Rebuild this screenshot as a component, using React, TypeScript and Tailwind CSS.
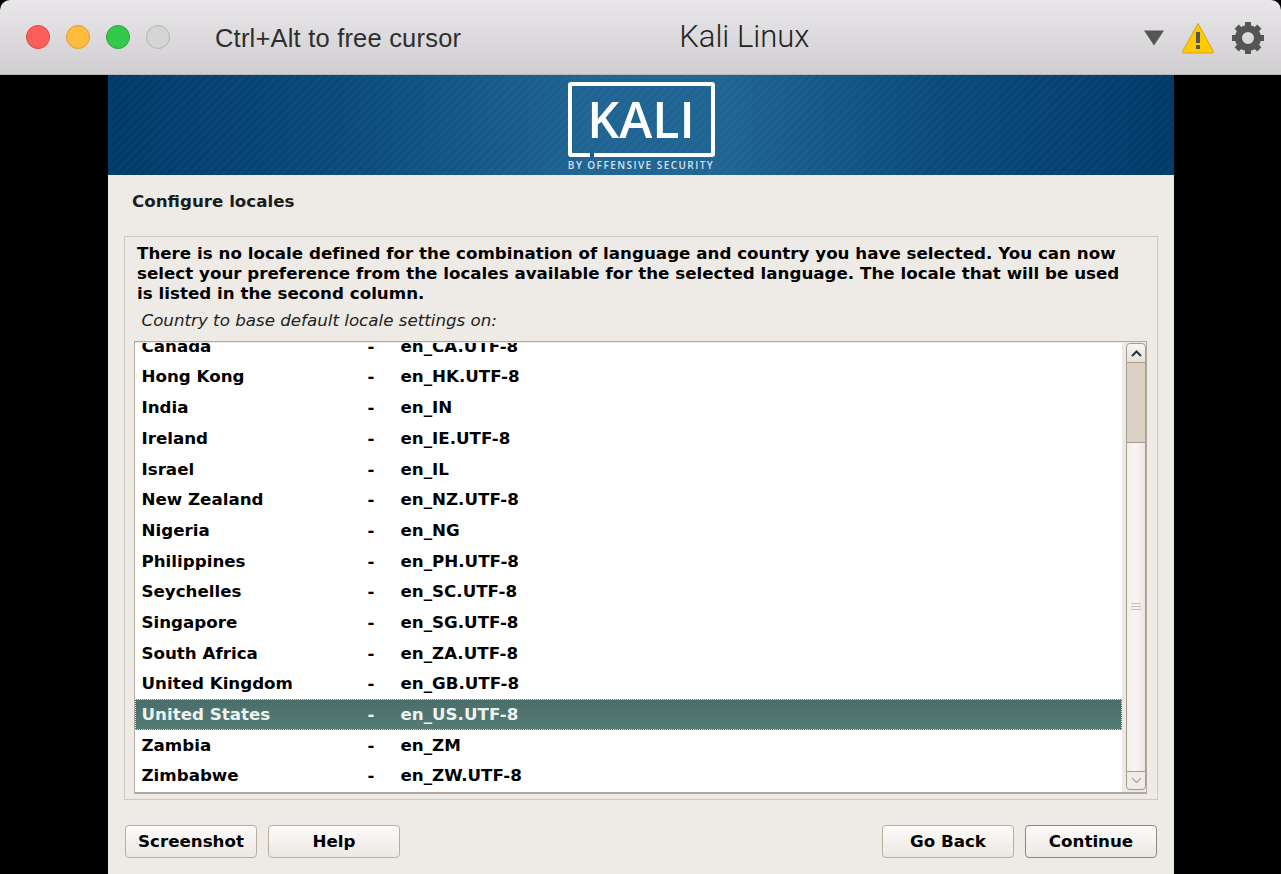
const rows = [
  ["Canada", "en_CA.UTF-8"],
  ["Hong Kong", "en_HK.UTF-8"],
  ["India", "en_IN"],
  ["Ireland", "en_IE.UTF-8"],
  ["Israel", "en_IL"],
  ["New Zealand", "en_NZ.UTF-8"],
  ["Nigeria", "en_NG"],
  ["Philippines", "en_PH.UTF-8"],
  ["Seychelles", "en_SC.UTF-8"],
  ["Singapore", "en_SG.UTF-8"],
  ["South Africa", "en_ZA.UTF-8"],
  ["United Kingdom", "en_GB.UTF-8"],
  ["United States", "en_US.UTF-8"],
  ["Zambia", "en_ZM"],
  ["Zimbabwe", "en_ZW.UTF-8"],
];

function TitleBar() {
  return (
    <div className="flex h-[75px] items-center rounded-t-[10px] border-b border-[#b9b7b9] bg-gradient-to-b from-[#e9e7e9] to-[#d0ced0] pl-[26px] pr-[16px] font-['Liberation_Sans',sans-serif] text-[#2e2e2e]">
      <div className="flex gap-4">
        <div className="size-6 rounded-full border border-[#e2463f] bg-[#fc5e5a]" />
        <div className="size-6 rounded-full border border-[#e09e2e] bg-[#fdbc40]" />
        <div className="size-6 rounded-full border border-[#2aa73a] bg-[#34c84a]" />
        <div className="size-6 rounded-full border border-[#b4b4b4] bg-[#d4d4d4]" />
      </div>
      <span className="ml-[45px] pt-[3px] text-[25.5px] tracking-[0.2px]">Ctrl+Alt to free cursor</span>
      <span className="ml-[218px] pt-[1px] font-['Roboto',sans-serif] text-[31px] font-light text-[#222]">Kali Linux</span>
      <div className="ml-auto flex items-center pt-[1px]">
        <svg width="22" height="17" viewBox="0 0 22 17">
          <path d="M1 1.5H21L11 16.5Z" fill="#555" />
        </svg>
        <svg className="ml-[16px]" width="34" height="32" viewBox="0 0 34 32">
          <path d="M17 1.5L32.5 29.5Q33 31 31.5 31H2.5Q1 31 1.5 29.5Z" fill="#fdcb00" stroke="#d9a21b" strokeWidth="1" />
          <rect x="15" y="10" width="4" height="11" fill="#555" />
          <rect x="15" y="23" width="4" height="4" fill="#555" />
        </svg>
        <svg className="ml-[16px]" width="34" height="34" viewBox="0 0 34 34">
          {[0, 45, 90, 135, 180, 225, 270, 315].map((a) => (
            <rect key={a} x="14" y="1" width="6" height="8" fill="#555" transform={`rotate(${a} 17 17)`} />
          ))}
          <circle cx="17" cy="17" r="9.5" fill="none" stroke="#555" strokeWidth="7" />
        </svg>
      </div>
    </div>
  );
}

function Banner() {
  return (
    <div className="flex h-[100px] flex-col items-center bg-[repeating-linear-gradient(135deg,rgba(255,255,255,0.02)_0,rgba(255,255,255,0.02)_3px,transparent_3px,transparent_6px),linear-gradient(90deg,#003a6b_0%,#0a4a7b_22%,#1f6492_45%,#1f6492_58%,#0a4a7b_78%,#003a6b_100%)] pt-[7px] font-['Open_Sans',sans-serif] text-white">
      <div className="relative flex h-[75px] w-[147px] items-center justify-center rounded-[3px] border-[4px] border-white pb-[2px]">
        <span className="text-[50px] font-semibold leading-none">KALI</span>
        <div className="absolute -bottom-[4px] left-[18px] h-[4px] w-[4px] bg-[#1a5b8b]" />
      </div>
      <span className="mt-[2px] text-[10px] font-semibold leading-[12px] tracking-[1.45px] text-[#d6e2ec]">BY OFFENSIVE SECURITY</span>
    </div>
  );
}

function Scrollbar() {
  return (
    <div className="ml-[4px] flex h-[447px] w-[20px] flex-col">
      <div className="flex h-[20px] items-center justify-center rounded-t-[4px] border border-[#a59c8d] bg-gradient-to-b from-[#f8f6f4] to-[#e6e1da]">
        <svg width="11" height="7" viewBox="0 0 11 7">
          <path d="M1 6L5.5 1.5L10 6" fill="none" stroke="#2e3436" strokeWidth="2" />
        </svg>
      </div>
      <div className="h-[79px] border-x border-[#a59c8d] bg-[#dcd1c5]" />
      <div className="flex flex-1 items-center justify-center border-x border-t border-[#a59c8d] bg-gradient-to-r from-[#f3efec] via-[#f8f5f3] to-[#ebe6e2]">
        <div className="flex w-[10px] translate-y-[-1px] flex-col gap-[2px]">
          <div className="h-px bg-[#c8bfb2]" />
          <div className="h-px bg-[#c8bfb2]" />
          <div className="h-px bg-[#c8bfb2]" />
        </div>
      </div>
      <div className="flex h-[19px] items-center justify-center rounded-b-[4px] border border-[#a59c8d] bg-[#f0ece8]">
        <svg width="11" height="7" viewBox="0 0 11 7">
          <path d="M1 1L5.5 5.5L10 1" fill="none" stroke="#b5aea4" strokeWidth="1.5" />
        </svg>
      </div>
    </div>
  );
}

function LocaleList() {
  return (
    <div className="mt-[10px] ml-[9px] mr-[10px] flex h-[453px] border border-[#b3aa9b] border-b-[2px] bg-[#edeae5] pt-[1px]">
      <div className="h-[449px] w-[989px] overflow-hidden bg-white">
        <div className="-mt-[12px]">
          {rows.map(([country, locale]) => {
            const selected = country === "United States";
            return (
              <div
                key={country}
                className={
                  selected
                    ? "flex h-[30.68px] items-center border border-dotted border-[#d5dfdc] bg-gradient-to-b from-[#4a6f6a] to-[#557b76] pl-[5.5px] text-[#eef3f1]"
                    : "flex h-[30.68px] items-center border border-transparent pl-[5.5px] text-black"
                }
              >
                <span className="w-[226px]">{country}</span>
                <span className="w-[33px]">-</span>
                <span>{locale}</span>
              </div>
            );
          })}
        </div>
      </div>
      <Scrollbar />
    </div>
  );
}

function Btn({ label, dark }: { label: string; dark?: boolean }) {
  return (
    <button
      className={
        "h-[33px] w-[132px] rounded-[4px] border-[1.5px] bg-gradient-to-b from-[#fdfbfa] to-[#ece8e3] text-black " +
        (dark ? "border-[#8f8778]" : "border-[#b8afa0]")
      }
    >
      {label}
    </button>
  );
}

export default function App() {
  return (
    <div className="h-[874px] overflow-hidden bg-black">
      <TitleBar />
      <div className="ml-[108px] w-[1066px]">
        <Banner />
        <div className="h-[699px] bg-[#eeebe6] px-[16px] font-['DejaVu_Sans',sans-serif] text-[16.7px] font-bold text-black">
          <h1 className="pt-[15px] pl-[8px] text-[#1c1c1c] leading-[22px]">Configure locales</h1>
          <div className="mt-[24px] h-[564px] border-[1.5px] border-[#cfc9bc] pt-[6px]">
            <p className="pl-[12px] leading-[20px] tracking-[0.01px]">
              There is no locale defined for the combination of language and country you have selected. You can now
              <br />
              select your preference from the locales available for the selected language. The locale that will be used
              <br />
              is listed in the second column.
            </p>
            <p className="mt-[6px] pl-[16.5px] text-[#222] leading-[22px] font-normal italic">Country to base default locale settings on:</p>
            <LocaleList />
          </div>
          <div className="mt-[25px] flex gap-[11px] pl-[1px] pr-[1px]">
            <Btn label="Screenshot" />
            <Btn label="Help" />
            <div className="ml-auto flex gap-[11px]">
              <Btn label="Go Back" />
              <Btn label="Continue" dark />
            </div>
          </div>
        </div>
      </div>
    </div>
  );
}
